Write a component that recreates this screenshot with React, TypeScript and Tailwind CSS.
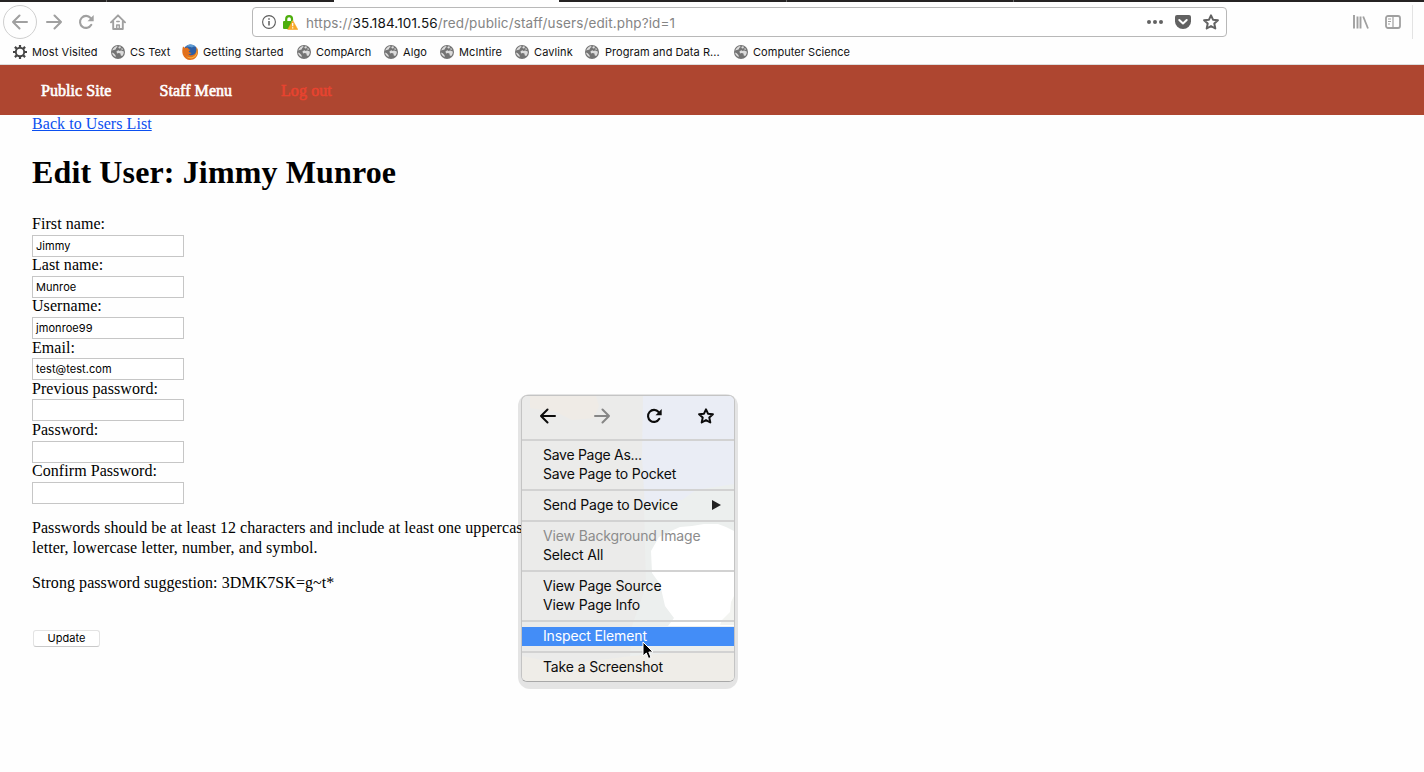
import React from "react";

const globe = (
  <svg viewBox="0 0 14 14" className="size-[14px] shrink-0">
    <circle cx="7" cy="7" r="7" fill="#747474" />
    <path d="M1.200 5.500C2.200 3 4 1.500 6 1.100l.6.900-1.200.8-.8 1.600-1.800.5zM8 1.200l2 .6-.5 1.500-1.300.3-.9-.9zM5.500 6.200l2-.9 1 .8 1.600-.6 2.700.9c.1 1.800-.4 3.300-1.600 4.500l-1.400-.4-.4-1.900-1.600-.6-1.800.5zM1 7.500l1.800.8 1.700 1.900.3 1.900C2.700 11.300 1.300 9.800 1 7.500zM11 3l1.200 1.500-1.300.3-.8-.8z" fill="#dcdcdc" />
  </svg>
);

const gear = (
  <svg viewBox="0 0 14 14" className="size-[14px] shrink-0" fill="none" stroke="#454545">
    <circle cx="7" cy="7" r="4.200" strokeWidth="1.900" />
    <path d="M7 0v2.600M7 11.400V14M0 7h2.600M11.400 7H14M1.900 1.900l1.900 1.900M10.200 10.200l1.900 1.900M1.900 12.100l1.900-1.900M10.200 3.800l1.900-1.900" strokeWidth="2.200" />
  </svg>
);

const firefox = (
  <svg viewBox="0 0 16 16" className="size-[16px] shrink-0">
    <circle cx="8.500" cy="7.500" r="7" fill="#2d5fa6" />
    <path d="M4 2.500c2.500-2.700 7-2.500 9.500 0-1.500-.3-2.500 0-3.500 1-2-.8-4-.8-6-1z" fill="#5d9bd3" />
    <path d="M1 2.500C.2 5 0 8 .8 10.500 2 14 5 16 8 16c4.500 0 8-3.500 8-8 0-2-.6-3.800-1.600-5 .4 3.200-.2 5.900-2 7.300-2 1.500-5 1.200-6-.3 1.300.2 2.500-.2 3.300-1-1.500 0-2.600-.4-3-1.700L8.500 6 6.900 5.200C6.500 4.500 6 4 5.500 3.500 4.800 3.300 4 3.400 3.200 4z" fill="#e2701c" />
    <path d="M14.400 3c1 3.500.4 7-2.100 9-2.500 2-6.300 1.700-8.200-.3 1.300 3 7 4 9.900.3 2-2.700 1.800-6.500.4-9z" fill="#f6b03c" />
  </svg>
);

const bookmarks = [
  { label: "Most Visited", icon: gear, box: "w-[98px]", text: "tracking-[0.1px]" },
  { label: "CS Text", icon: globe, box: "w-[71px]", text: "tracking-[0px]" },
  { label: "Getting Started", icon: firefox, box: "w-[115px]", text: "tracking-[0.150px]" },
  { label: "CompArch", icon: globe, box: "w-[87px]", text: "tracking-[0.05px]" },
  { label: "Algo", icon: globe, box: "w-[56px]", text: "tracking-[0.1px]" },
  { label: "McIntire", icon: globe, box: "w-[75px]", text: "tracking-[0.1px]" },
  { label: "Cavlink", icon: globe, box: "w-[70px]", text: "tracking-[0.1px]" },
  { label: "Program and Data R...", icon: globe, box: "w-[149px]", text: "pl-px tracking-[0.060px]" },
  { label: "Computer Science", icon: globe, box: "w-[130px]", text: "tracking-[0.05px]" },
];

const fields = [
  { label: "First name:", value: "Jimmy", pad: "h-[19px]" },
  { label: "Last name:", value: "Munroe", pad: "h-[19px]" },
  { label: "Username:", value: "jmonroe99", pad: "h-[19px]" },
  { label: "Email:", value: "test@test.com", pad: "h-[19px] pt-px" },
  { label: "Previous password:", value: "", pad: "h-[19px] pt-px" },
  { label: "Password:", value: "", pad: "h-[20px] pt-px" },
  { label: "Confirm Password:", value: "", pad: "h-[19px]" },
];

function Arrow({ flip = false, className = "" }: { flip?: boolean; className?: string }) {
  return (
    <svg viewBox="0 0 16 16" className={className} fill="none" stroke="currentColor" strokeWidth="2" strokeLinecap="round" strokeLinejoin="round">
      {flip ? <path d="M1 8h14M8.500 1.500L15 8l-6.500 6.500" /> : <path d="M15 8H1M7.500 1.500L1 8l6.500 6.500" />}
    </svg>
  );
}

function Reload({ className = "" }: { className?: string }) {
  return (
    <svg viewBox="0 0 16 16" className={className}>
      <path d="M12.600 4A6 6 0 1 0 13.300 10.800" fill="none" stroke="currentColor" strokeWidth="2.100" strokeLinecap="round" />
      <path d="M15.700 1v6.200H9.500z" fill="currentColor" />
    </svg>
  );
}

function Star({ className = "" }: { className?: string }) {
  return (
    <svg viewBox="0 0 16 16" className={className} fill="none" stroke="currentColor" strokeWidth="2" strokeLinejoin="round">
      <path d="M8 1.300l2 4.400 4.900.6-3.600 3.300 1 4.900L8 12.100l-4.300 2.400 1-4.900L1.100 6.300 6 5.700z" />
    </svg>
  );
}

function Toolbar() {
  return (
    <div className="flex h-[38px] shrink-0 items-center pt-[2px] text-[#a0a0a0]">
      <div className="ml-[3px] flex size-[34px] items-center justify-center rounded-full border border-[#cfcfcf]">
        <Arrow className="size-4" />
      </div>
      <Arrow flip className="ml-[9px] size-4" />
      <Reload className="ml-[16px] size-4" />
      <svg viewBox="0 0 16 16" className="ml-[16px] size-4" fill="none" stroke="currentColor" strokeWidth="1.900" strokeLinejoin="round" strokeLinecap="round">
        <path d="M1 8.300L8 1.300l7 7M3.200 7.500V15h9.600V7.500" />
        <path d="M6.700 15v-4h2.600v4" strokeWidth="1.500" />
        <path d="M6.800 7.500h2.400" strokeWidth="1.500" />
      </svg>
      <div className="ml-[126px] flex h-[30px] w-[975px] items-center rounded-[4px] border border-[#b8b8b8] bg-white">
        <svg viewBox="0 0 14 14" className="ml-[9px] size-[14px]" fill="none" stroke="#5c5c5c">
          <circle cx="7" cy="7" r="6.400" strokeWidth="1.100" />
          <path d="M7 6v4.500M7 3.300v1.500" strokeWidth="1.500" />
        </svg>
        <svg viewBox="0 0 15 15" className="ml-[7px] size-[15px]">
          <path d="M3.200 7.500V4a2.900 2.900 0 0 1 5.800 0v2" fill="none" stroke="#4eae0d" strokeWidth="2.200" />
          <rect x="0" y="6" width="9" height="8" rx="1" fill="#4eae0d" />
          <path d="M9.700 5.500L14.800 14.500H4.700z" fill="#f7a829" stroke="#f7a829" strokeWidth=".6" strokeLinejoin="round" />
          <path d="M9.700 8v3.200M9.700 12.200v1.200" stroke="#fff" strokeWidth="1.200" />
        </svg>
        <span className="ml-[8px] w-[820px] whitespace-nowrap pt-[2px] text-[13.500px] tracking-[0.130px] text-[#858585]">
          https://<span className="text-[#111]">35.184.101.56</span>/red/public/staff/users/edit.php?id=1
        </span>
        <div className="ml-[21px] flex items-center text-[#626262]">
          <svg viewBox="0 0 16 16" className="size-4" fill="currentColor">
            <circle cx="2" cy="8" r="2" /><circle cx="8" cy="8" r="2" /><circle cx="14" cy="8" r="2" />
          </svg>
          <svg viewBox="0 0 16 16" className="ml-[12px] size-4">
            <path d="M2 1h12q2 0 2 2v4.500a8 7.500 0 0 1-16 0V3q0-2 2-2z" fill="currentColor" />
            <path d="M4.300 6L8 9.500 11.700 6" fill="none" stroke="#fff" strokeWidth="2" strokeLinecap="round" strokeLinejoin="round" />
          </svg>
          <Star className="ml-[12px] size-4" />
        </div>
      </div>
      <svg viewBox="0 0 16 16" className="ml-[126px] size-4" stroke="currentColor" fill="none">
        <path d="M1 1v13.500M4.500 2.500v12M7.500 2.500v12" strokeWidth="1.900" />
        <path d="M10.200 2.500l4.800 12" strokeWidth="1.800" />
      </svg>
      <svg viewBox="0 0 16 16" className="ml-4 size-4" stroke="currentColor" fill="none">
        <rect x="1" y="2" width="14" height="12" rx="2" strokeWidth="1.800" />
        <path d="M8 2v12M3 5h3M3 7.500h3M3 10h2" strokeWidth="1.200" />
      </svg>
      <div className="ml-[11px] h-[34px] w-px bg-[#e3e3e3]" />
    </div>
  );
}

function MenuLine() {
  return <div className="my-[5px] h-[2px] bg-[#d2d2d2]" />;
}

function MenuItem({ children, className = "text-[#0c0c0c]" }: { children: React.ReactNode; className?: string }) {
  return <div className={`flex h-[19px] items-center whitespace-nowrap pb-[2px] pl-[21px] ${className}`}>{children}</div>;
}

function ContextMenu() {
  return (
    <div className="absolute left-[518px] top-[394px] h-[295px] w-[220px] rounded-[12px] bg-black/10 pl-[3px] pt-px text-[14px] tracking-[-0.140px]">
      <div className="relative h-[287px] w-[214px] overflow-hidden rounded-[6px] border border-[#c4c4c4] border-b-[#a8a8a8] bg-[#ebebea]">
        <svg viewBox="0 0 212 285" className="absolute inset-0 h-full w-full">
          <path d="M8 0h66l3 10-5 12-22 2-16-8L8 12z" fill="#efebe6" />
          <path d="M121 0h91v130H124l-4-70z" fill="#eaedf5" />
          <path d="M122 108l38-4 14-10 38-6v202H106l4-60 14-40z" fill="#ecefee" />
          <path d="M158 131l12-1 12-2 14 0 8 3 8 4v95h-66l6-8-9-12-5-22-8-11-1-22 8-14 12-6z" fill="#fff" />
          <path d="M212 200l-3 6-1 10-8 8-2 5h14z" fill="#f3f4f1" />
          <path d="M0 260l20 4 40 2 50-6 102-8v34H0z" fill="#efede8" />
        </svg>
        <div className="relative">
          <div className="flex h-[38px] items-center pt-px pl-[18px] text-[#0c0c0c]">
            <Arrow className="size-4" />
            <Arrow flip className="ml-[38px] size-4 text-[#868686]" />
            <Reload className="ml-[36px] size-4" />
            <Star className="ml-[36px] size-4" />
          </div>
          <MenuLine />
          <MenuItem><span className="tracking-[-0.280px]">Save Page As...</span></MenuItem>
          <MenuItem>Save Page to Pocket</MenuItem>
          <MenuLine />
          <MenuItem>
            <span className="w-[169px]">Send Page to Device</span>
            <svg viewBox="0 0 9 10" className="h-[10px] w-[9px]"><path d="M0 0l9 5-9 5z" fill="#222" /></svg>
          </MenuItem>
          <MenuLine />
          <MenuItem className="text-[#8c8c8c]">View Background Image</MenuItem>
          <MenuItem>Select All</MenuItem>
          <MenuLine />
          <MenuItem>View Page Source</MenuItem>
          <MenuItem>View Page Info</MenuItem>
          <MenuLine />
          <MenuItem className="bg-[#438df7] text-white">Inspect Element</MenuItem>
          <MenuLine />
          <MenuItem>Take a Screenshot</MenuItem>
        </div>
      </div>
    </div>
  );
}

export default function App() {
  return (
    <div className="relative flex h-[772px] w-[1424px] flex-col overflow-hidden bg-[#fefefe] font-['Inter',sans-serif]">
      <div className="flex h-[2px] shrink-0 bg-[#252323]">
        <div className="ml-[106px] w-px bg-[#666]" />
        <div className="ml-[227px] w-[225px] bg-[#fefefe]" />
        <div className="ml-[227px] w-px bg-[#666]" />
        <div className="ml-[226px] w-px bg-[#666]" />
      </div>
      <Toolbar />
      <div className="flex h-[25px] shrink-0 items-center border-b border-[#ddd] pl-[13px] text-[11px] text-[#111]">
        {bookmarks.map((b) => (
          <div key={b.label} className={`flex shrink-0 items-center gap-[5px] whitespace-nowrap ${b.box}`}>
            {b.icon}
            <span className={b.text}>{b.label}</span>
          </div>
        ))}
      </div>
      <nav className="flex h-[50px] shrink-0 items-center bg-[#ae4630] pl-[41px] pt-[2px] font-['Liberation_Serif',serif] text-[16px] text-white [-webkit-text-stroke:0.600px_currentColor]">
        <span className="w-[118.500px] tracking-[0.050px]">Public Site</span>
        <span className="w-[121.500px] tracking-[0.050px]">Staff Menu</span>
        <span className="tracking-[0.100px] text-[#e8432f]">Log out</span>
      </nav>
      <main className="flex flex-col items-start pl-[32px] font-['Liberation_Serif',serif] text-[16px] leading-[18px] tracking-[0.060px] text-black">
        <a className="text-[#0b4ff0] underline">Back to Users List</a>
        <h1 className="mt-[20px] h-[38px] text-[32px] font-bold leading-[38px] tracking-[0.130px]">Edit User: Jimmy Munroe</h1>
        <form className="mt-[25px] flex flex-col">
          {fields.map((f) => (
            <div key={f.label}>
              <div className={`leading-[16px] ${f.pad}`}>{f.label}</div>
              <div className="flex h-[22px] w-[152px] items-center border border-[#c6c6c6] bg-white pl-[3px] font-['Inter',sans-serif] text-[11px]">{f.value}</div>
            </div>
          ))}
        </form>
        <p className="mt-[14px] whitespace-nowrap leading-[20px]">
          Passwords should be at least 12 characters and include at least one uppercase
          <br />
          letter, lowercase letter, number, and symbol.
        </p>
        <p className="mt-[15px] leading-[20px]">Strong password suggestion: 3DMK7SK=g~t*</p>
        <div className="ml-px mt-[37px] flex h-[17px] w-[67px] items-center justify-center rounded-[3px] border border-[#e3e3e3] border-b-[#c9c9c9] bg-white pb-[2px] font-['Inter',sans-serif] text-[11px]">Update</div>
      </main>
      <ContextMenu />
      <svg viewBox="0 0 12 19" className="absolute left-[642px] top-[641px] h-[19px] w-[12px]">
        <path d="M1 1v14l3.300-3 2.200 5.500 2.500-1L6.800 11H11z" fill="#000" stroke="#fff" strokeWidth="1" />
      </svg>
    </div>
  );
}
